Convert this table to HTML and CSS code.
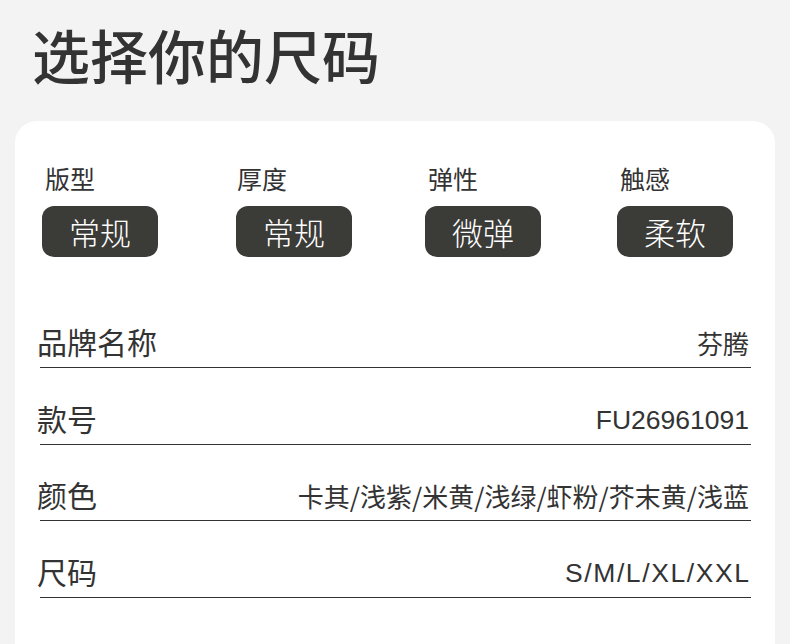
FILE: index.html
```html
<!DOCTYPE html>
<html lang="zh">
<head>
<meta charset="utf-8">
<title>选择你的尺码</title>
<link rel="stylesheet" href="styles.css">
</head>
<body>
<h1 class="title">选择你的尺码</h1>
<section class="card">
  <div class="specs">
    <div class="spec">
      <div class="spec-label">版型</div>
      <div class="pill">常规</div>
    </div>
    <div class="spec">
      <div class="spec-label">厚度</div>
      <div class="pill">常规</div>
    </div>
    <div class="spec">
      <div class="spec-label">弹性</div>
      <div class="pill">微弹</div>
    </div>
    <div class="spec">
      <div class="spec-label">触感</div>
      <div class="pill">柔软</div>
    </div>
  </div>
  <div class="rows">
    <div class="row">
      <span class="row-label">品牌名称</span>
      <span class="row-value">芬腾</span>
    </div>
    <div class="row">
      <span class="row-label">款号</span>
      <span class="row-value latin">FU26961091</span>
    </div>
    <div class="row">
      <span class="row-label">颜色</span>
      <span class="row-value">卡其/浅紫/米黄/浅绿/虾粉/芥末黄/浅蓝</span>
    </div>
    <div class="row">
      <span class="row-label">尺码</span>
      <span class="row-value latin sizes">S/M/L/XL/XXL</span>
    </div>
  </div>
</section>
</body>
</html>
```

FILE: styles.css
```css
html, body {
  margin: 0;
  padding: 0;
}
body {
  background: #f3f3f3;
  font-family: "Noto Sans CJK SC", "Noto Sans", sans-serif;
  color: #333333;
  height: 644px;
  overflow: hidden;
}
.title {
  margin: 0;
  padding: 21px 0 0 32px;
  font-size: 58px;
  line-height: 66px;
  font-weight: 500;
  color: #333333;
  height: 97px;
  box-sizing: border-box;
}
.card {
  margin: 24px 15px 0 15px;
  background: #ffffff;
  border-radius: 22px 22px 0 0;
  height: 523px;
  padding: 40px 26px 0 25px;
  box-sizing: border-box;
}
.specs {
  display: grid;
  grid-template-columns: 194px 189px 192px 116px;
  padding-left: 2px;
}
.spec-label {
  font-size: 25px;
  line-height: 34px;
  padding-left: 3px;
  color: #333333;
}
.spec:nth-child(2) .spec-label {
  padding-left: 1px;
}
.pill {
  margin-top: 11px;
  width: 116px;
  height: 51px;
  border-radius: 12px;
  background: #3b3b37;
  color: #ffffff;
  font-size: 31px;
  font-weight: 300;
  line-height: 51px;
  text-align: center;
}
.rows {
  margin-top: 35px;
}
.row {
  display: flex;
  justify-content: space-between;
  align-items: flex-end;
  height: 76px;
  border-bottom: 1.5px solid #333333;
  box-sizing: border-box;
  padding-bottom: 6px;
  margin-bottom: 0.7px;
  margin-right: -2px;
}
.row-label {
  font-size: 30px;
  line-height: 40px;
  margin-left: -3px;
}
.row-value {
  font-size: 26px;
  line-height: 36px;
  margin-right: 2px;
}
.row-value.latin {
  font-family: "Liberation Sans", Arial, sans-serif;
  font-size: 26.5px;
}
.row-value.sizes {
  letter-spacing: 1.6px;
  margin-right: 0.4px;
}
```
